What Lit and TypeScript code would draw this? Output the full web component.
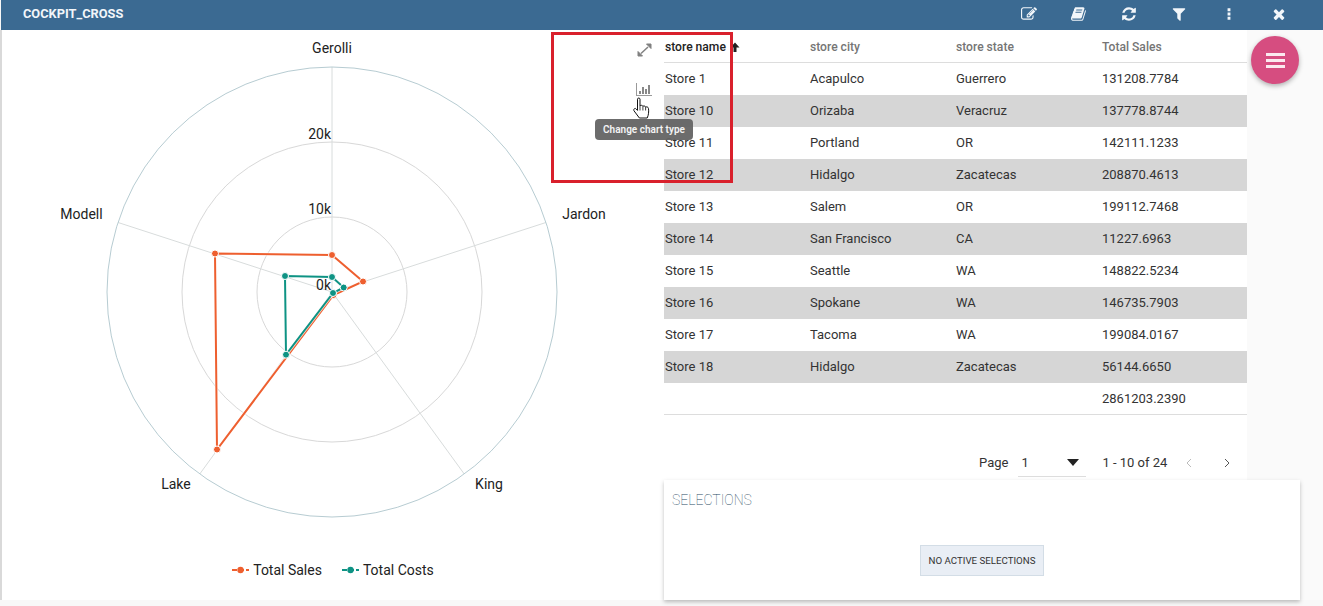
import { LitElement, html, css, svg } from "lit";
import { customElement } from "lit/decorators.js";

const CX = 332;
const CY = 292;

const rows = [
  ["Store 1", "Acapulco", "Guerrero", "131208.7784"],
  ["Store 10", "Orizaba", "Veracruz", "137778.8744"],
  ["Store 11", "Portland", "OR", "142111.1233"],
  ["Store 12", "Hidalgo", "Zacatecas", "208870.4613"],
  ["Store 13", "Salem", "OR", "199112.7468"],
  ["Store 14", "San Francisco", "CA", "11227.6963"],
  ["Store 15", "Seattle", "WA", "148822.5234"],
  ["Store 16", "Spokane", "WA", "146735.7903"],
  ["Store 17", "Tacoma", "WA", "199084.0167"],
  ["Store 18", "Hidalgo", "Zacatecas", "56144.6650"],
];

const sales = [[332, 255], [363, 281.5], [333.5, 295], [217, 449.5], [215, 253.5]];
const costs = [[332, 277], [343.7, 287.5], [333, 293], [286, 354.7], [285, 276]];

// font-awesome 4 glyphs, 1792 grid
const toolbar = [
  "M888 1184l116-116-152-152-116 116v56h96v96h56zm440-720q-16-16-33 1l-350 350q-17 17-1 33t33-1l350-350q17-17 1-33zm80 594v190q0 119-84.5 203.5t-203.5 84.5h-832q-119 0-203.5-84.5t-84.5-203.5v-832q0-119 84.5-203.5t203.5-84.5h832q63 0 117 25 15 7 18 23 3 17-9 29l-49 49q-14 14-32 8-23-6-45-6h-832q-66 0-113 47t-47 113v832q0 66 47 113t113 47h832q66 0 113-47t47-113v-126q0-13 9-22l64-64q15-15 35-7t20 29zm-96-738l288 288-672 672h-288v-288zm444 132l-92 92-288-288 92-92q28-28 68-28t68 28l152 152q28 28 28 68t-28 68z",
  "M1639 478q40 57 18 129l-275 906q-19 64-76.5 107.5t-122.5 43.5h-923q-77 0-148.5-53.5t-99.5-131.5q-24-67-2-127 0-4 3-27t4-37q1-8-3-21.5t-3-19.5q2-11 8-21t16.5-23.5 16.5-23.5q23-38 45-91.5t30-91.5q3-10 .5-30t-.5-28q3-11 17-28t17-23q21-36 42-92t25-90q1-9-2.5-32t.5-28q4-13 22-30.5t22-22.5q19-26 42.5-84.5t27.5-96.5q1-8-3-25.5t-2-26.5q2-8 9-18t18-23 17-21q8-12 16.5-30.5t15-35 16-36 19.5-32 26.5-23.5 36-11.5 47.5 5.5l-1 3q38-9 51-9h761q74 0 114 56t18 130l-274 906q-36 119-71.5 153.5t-128.5 34.5h-869q-27 0-38 15-11 16-1 43 24 70 144 70h923q29 0 56-15.5t35-41.5l300-987q7-22 5-57 38 15 59 43zm-1064 2q-4 13 2 22.5t20 9.5h608q13 0 25.5-9.5t16.5-22.5l21-64q4-13-2-22.5t-20-9.5h-608q-13 0-25.5 9.5t-16.5 22.5zm-83 256q-4 13 2 22.5t20 9.5h608q13 0 25.5-9.5t16.5-22.5l21-64q4-13-2-22.5t-20-9.5h-608q-13 0-25.5 9.5t-16.5 22.5z",
  "M1639 1056q0 5-1 7-64 268-268 434.5t-478 166.5q-146 0-282.5-55t-243.5-157l-129 129q-19 19-45 19t-45-19-19-45v-448q0-26 19-45t45-19h448q26 0 45 19t19 45-19 45l-137 137q71 66 161 102t187 36q134 0 250-65t186-179q11-17 53-117 8-23 30-23h192q13 0 22.5 9.5t9.5 22.5zm25-800v448q0 26-19 45t-45 19h-448q-26 0-45-19t-19-45 19-45l138-138q-148-137-349-137-134 0-250 65t-186 179q-11 17-53 117-8 23-30 23h-199q-13 0-22.5-9.5t-9.5-22.5v-7q65-268 270-434.5t480-166.5q146 0 284 55.5t245 156.5l130-129q19-19 45-19t45 19 19 45z",
  "M1595 295q17 41-14 70l-493 493v742q0 42-39 59-13 5-25 5-27 0-45-19l-256-256q-19-19-19-45v-486l-493-493q-31-29-14-70 17-39 59-39h1280q42 0 59 39z",
  "M736 1216h320v320h-320zM736 736h320v320h-320zM736 256h320v320h-320z",
  "M1490 1322q0 40-28 68l-136 136q-28 28-68 28t-68-28l-294-294-294 294q-28 28-68 28t-68-28l-136-136q-28-28-28-68t28-68l294-294-294-294q-28-28-28-68t28-68l136-136q28-28 68-28t68 28l294 294 294-294q28-28 68-28t68 28l136 136q28 28 28 68t-28 68l-294 294 294 294q28 28 28 68z",
];

@customElement("app-root")
export class AppRoot extends LitElement {
  static styles = css`
    :host {
      display: block;
      position: relative;
      width: 1323px;
      height: 606px;
      overflow: hidden;
      background: #f8f8f8;
      font-family: Roboto, "Liberation Sans", sans-serif;
      color: #333;
    }
    .topbar {
      height: 30px;
      box-sizing: border-box;
      margin-left: 1px;
      background: #3b6a92;
      display: flex;
      align-items: center;
      padding: 0 19px 3px 22px;
      color: #f2f6fa;
    }
    .title {
      flex: 1;
      font-size: 12.8px;
      font-weight: 700;
    }
    .tool {
      width: 50px;
      display: flex;
      justify-content: center;
    }
    .tool svg {
      display: block;
      width: 16px;
      height: 16px;
      fill: #f2f6fa;
    }
    .main {
      display: flex;
      height: 570px;
      border-left: 2px solid #d9d9d9;
    }
    .chart {
      width: 662px;
      background: #fff;
    }
    .chart svg {
      display: block;
    }
    .chart text {
      font-family: Roboto, "Liberation Sans", sans-serif;
      font-size: 14px;
      fill: #222;
    }
    .legend {
      height: 40px;
      display: flex;
      justify-content: center;
      align-items: center;
      gap: 20px;
      font-size: 14px;
      color: #222;
    }
    .legend-item {
      display: flex;
      align-items: center;
      gap: 4px;
    }
    .side {
      width: 659px;
      display: flex;
      flex-direction: column;
      background: #fafafa;
    }
    .table {
      width: 583px;
      background: #fff;
      font-size: 13px;
    }
    .row {
      display: grid;
      grid-template-columns: 145px 146px 146px 145px;
      height: 32px;
      align-items: center;
      padding: 0 0 1px 1px;
      box-sizing: border-box;
    }
    .row:nth-child(odd) {
      background: #d6d6d6;
    }
    .row:first-child {
      background: #fff;
      height: 33px;
      padding: 1px 0 0 1px;
      border-bottom: 1px solid #ddd;
      color: #757575;
      font-size: 12.1px;
      font-weight: 500;
    }
    .row.total {
      background: #fff;
      padding-bottom: 0;
      border-bottom: 1px solid #ddd;
    }
    .sorted {
      color: #222;
      display: flex;
      align-items: center;
      gap: 4px;
    }
    .pager {
      width: 583px;
      height: 65px;
      box-sizing: border-box;
      background: #fff;
      display: flex;
      align-items: center;
      padding: 30px 0 0 315px;
      font-size: 13px;
    }
    .select {
      width: 68px;
      height: 29px;
      margin: 0 16px 0 10px;
      padding: 0 7px 0 3px;
      box-sizing: border-box;
      border-bottom: 1px solid #ddd;
      display: flex;
      align-items: center;
      justify-content: space-between;
    }
    .caret {
      width: 0;
      height: 0;
      border-left: 6px solid transparent;
      border-right: 6px solid transparent;
      border-top: 7px solid #222;
    }
    .chev {
      display: block;
      margin-left: 19px;
    }
    .chev + .chev {
      margin-left: 32px;
    }
    .selections {
      width: 636px;
      height: 120px;
      box-sizing: border-box;
      background: #fff;
      padding: 12px 8px 0;
      box-shadow: 0 2px 4px rgba(0, 0, 0, 0.25);
      display: flex;
      flex-direction: column;
    }
    .sel-title {
      font-size: 14px;
      font-weight: 100;
      line-height: 16px;
      color: #1f4a63;
    }
    .chip-line {
      display: flex;
      justify-content: center;
      margin-top: 37px;
    }
    .chip {
      width: 124px;
      height: 31px;
      box-sizing: border-box;
      background: #e9eef5;
      border: 1px solid #d3dde6;
      display: flex;
      align-items: center;
      justify-content: center;
      font-size: 9.7px;
      color: #333;
    }
    .fab {
      position: absolute;
      left: 1251px;
      top: 36px;
      width: 48px;
      height: 48px;
      border-radius: 50%;
      background: #d64d80;
      box-shadow: 0 2px 5px rgba(0, 0, 0, 0.3);
      display: flex;
      flex-direction: column;
      justify-content: center;
      align-items: center;
      gap: 3px;
    }
    .fab span {
      width: 19px;
      height: 3px;
      background: #fbe9ef;
    }
    .redbox {
      position: absolute;
      left: 551px;
      top: 32px;
      width: 182px;
      height: 151px;
      box-sizing: border-box;
      border: 3px solid #d9202c;
    }
    .overlay-icon {
      position: absolute;
      display: block;
    }
    .expand {
      left: 637px;
      top: 43px;
    }
    .bars {
      left: 636px;
      top: 83px;
    }
    .hand {
      left: 633px;
      top: 97px;
    }
    .tooltip {
      position: absolute;
      left: 595px;
      top: 119px;
      width: 98px;
      height: 21px;
      border-radius: 4px;
      background: rgba(100, 100, 100, 0.95);
      color: #f4f4f4;
      font-size: 10px;
      font-weight: 600;
      display: flex;
      align-items: center;
      justify-content: center;
    }
  `;

  private spoke(angle: number) {
    const a = (angle * Math.PI) / 180;
    return svg`<line x1=${CX} y1=${CY} x2=${CX + 225 * Math.sin(a)} y2=${CY - 225 * Math.cos(a)} stroke="#d8dcdc" />`;
  }

  private series(points: number[][], color: string) {
    const line = points.map((p) => p.join(",")).join(" ");
    return svg`
      <polygon points=${line} fill="none" stroke="#fff" stroke-width="3.5" opacity="0.7" />
      <polygon points=${line} fill="none" stroke=${color} stroke-width="2" />
      ${points.map((p) => svg`<circle cx=${p[0]} cy=${p[1]} r="3.5" fill=${color} stroke="#fff" stroke-width="1" />`)}
    `;
  }

  private legendMark(color: string) {
    return html`<svg width="17" height="8" viewBox="0 0 17 8">
      <line x1="0" y1="4" x2="17" y2="4" stroke=${color} stroke-width="2" stroke-dasharray="5 2" />
      <circle cx="8.5" cy="4" r="3.2" fill=${color} />
    </svg>`;
  }

  render() {
    return html`
      <div class="topbar">
        <div class="title">COCKPIT_CROSS</div>
        ${toolbar.map(
          (d) => html`<div class="tool"><svg viewBox="0 0 1792 1792"><path d=${d} /></svg></div>`
        )}
      </div>
      <div class="main">
        <div class="chart">
          <svg width="662" height="520" viewBox="2 30 662 520">
            <g fill="none" stroke="#d8d8d8">
              <circle cx=${CX} cy=${CY} r="75" />
              <circle cx=${CX} cy=${CY} r="150" />
            </g>
            ${[0, 72, 144, 216, 288].map((a) => this.spoke(a))}
            <circle cx=${CX} cy=${CY} r="225" fill="none" stroke="#b7ccd2" />
            ${this.series(sales, "#ee5f2f")}
            ${this.series(costs, "#0e9384")}
            <text x="332" y="53" text-anchor="middle">Gerolli</text>
            <text x="584" y="219" text-anchor="middle">Jardon</text>
            <text x="489" y="489" text-anchor="middle">King</text>
            <text x="176" y="489" text-anchor="middle">Lake</text>
            <text x="81.5" y="219" text-anchor="middle">Modell</text>
            <text x="331" y="139" text-anchor="end">20k</text>
            <text x="331" y="214" text-anchor="end">10k</text>
            <text x="331" y="290" text-anchor="end">0k</text>
          </svg>
          <div class="legend">
            <div class="legend-item">${this.legendMark("#ee5f2f")}Total Sales</div>
            <div class="legend-item">${this.legendMark("#0e9384")}Total Costs</div>
          </div>
        </div>
        <div class="side">
          <div class="table">
            <div class="row">
              <div class="sorted">
                store name
                <svg width="10" height="10" viewBox="0 0 10 10"><path d="M5 0.5 9.5 5.5H6.5V10H3.5V5.5H0.5Z" fill="#222" /></svg>
              </div>
              <div>store city</div>
              <div>store state</div>
              <div>Total Sales</div>
            </div>
            ${rows.map(
              (r) => html`<div class="row">${r.map((c) => html`<div>${c}</div>`)}</div>`
            )}
            <div class="row total"><div></div><div></div><div></div><div>2861203.2390</div></div>
          </div>
          <div class="pager">
            <span>Page</span>
            <div class="select"><span>1</span><span class="caret"></span></div>
            <span>1 - 10 of 24</span>
            <svg class="chev" width="6" height="10" viewBox="0 0 6 10"><path d="M5 1 1 5l4 4" fill="none" stroke="#bbb" /></svg>
            <svg class="chev" width="6" height="10" viewBox="0 0 6 10"><path d="M1 1l4 4-4 4" fill="none" stroke="#555" /></svg>
          </div>
          <div class="selections">
            <div class="sel-title">SELECTIONS</div>
            <div class="chip-line"><div class="chip">NO ACTIVE SELECTIONS</div></div>
          </div>
        </div>
      </div>
      <div class="fab"><span></span><span></span><span></span></div>
      <div class="redbox"></div>
      <svg class="overlay-icon expand" width="15" height="14" viewBox="0 0 15 14">
        <path d="M9.5 1H14V5.5ZM5.5 13H1V8.5Z" fill="#808080" stroke="#808080" stroke-linejoin="round" />
        <path d="M11 4 4 10.5" stroke="#808080" stroke-width="1.5" />
      </svg>
      <svg class="overlay-icon bars" width="16" height="13" viewBox="0 0 16 13">
        <path d="M0 0H1V12H16V13H0Z" fill="#999" />
        <path d="M3 8H5V11H3ZM6 4H8V11H6ZM9 6H11V11H9ZM12 2H14V11H12Z" fill="#888" />
      </svg>
      <svg class="overlay-icon hand" width="19" height="22" viewBox="0 0 19 22">
        <path d="M4.5 2.2C4.5.6 7 .6 7 2.2V9C7.4 8 9.6 8 9.9 9.4 10.4 8.6 12.4 8.8 12.6 10.2 13.2 9.5 15.4 9.8 15.5 11.6 15.9 14.5 15.6 18 14.2 21H6.4L1 13.8C.1 12.2 2 10.6 3.2 12L4.5 13.4Z" fill="#fff" stroke="#111" stroke-width="1" stroke-linejoin="round" />
        <path d="M7 9V13.5M9.9 9.4V13.5M12.6 10.2V13.5" stroke="#111" stroke-width="0.8" fill="none" />
      </svg>
      <div class="tooltip">Change chart type</div>
    `;
  }
}
